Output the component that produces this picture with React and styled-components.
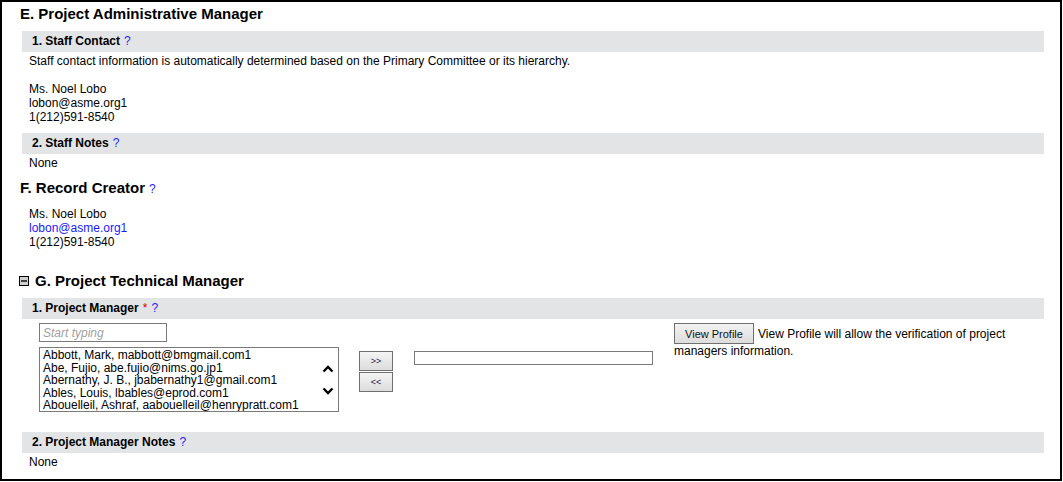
import React from 'react';
import styled, { createGlobalStyle } from 'styled-components';

const GlobalStyle = createGlobalStyle`
  body {
    margin: 0;
    background: #fff;
    font-family: "Liberation Sans", Arial, sans-serif;
    color: #000;
  }
`;

// outer black frame round the whole form
const Frame = styled.div`
  width: 1062px;
  height: 481px;
  box-sizing: border-box;
  border: 2px solid #000;
  padding: 3px 16px 0 0;
  overflow: hidden;
  background: #fff;
`;

const Heading = styled.h2`
  display: flex;
  align-items: center;
  gap: 6px;
  height: 18px;
  margin: ${(p) => p.$top || 0}px 0 8px 18px;
  font-size: 15px;
  line-height: 18px;
  font-weight: bold;
`;

const Help = styled.span`
  color: #2727f5;
  font-weight: normal;
  font-size: 12px;
  line-height: 0;
  margin-left: 4px;
`;

const Bar = styled.div`
  margin: ${(p) => p.$top || 0}px 0 0 20px;
  height: 21px;
  padding-left: 10px;
  background: #e3e4e6;
  font-size: 12px;
  font-weight: bold;
  line-height: 21px;
`;

const BarHelp = styled.span`
  color: #2727f5;
  font-weight: normal;
  margin-left: 4px;
`;

const Required = styled.span`
  color: #d40000;
  font-weight: normal;
  margin-left: 4px;
`;

const Body = styled.div`
  padding: 2px 0 0 27px;
  font-size: 12px;
  line-height: 14px;
`;

const MailLink = styled.a`
  color: #1a1aff;
  text-decoration: none;
`;

const ToggleBox = styled.svg`
  width: 10px;
  height: 10px;
  flex: none;
  margin-left: -1px;
`;

const PickerRow = styled.div`
  display: flex;
  align-items: flex-start;
  padding: 4px 0 0 37px;
`;

const PickerCol = styled.div`
  display: flex;
  flex-direction: column;
  gap: 5px;
  width: 300px;
`;

const SearchInput = styled.input`
  width: 128px;
  height: 19px;
  box-sizing: border-box;
  border: 1px solid #7a7a7a;
  padding: 0 3px;
  font-family: "Liberation Sans", Arial, sans-serif;
  font-size: 12px;
  outline: none;
  &::placeholder {
    color: #a0a0a0;
    font-style: italic;
  }
`;

const ListBox = styled.div`
  display: flex;
  width: 300px;
  height: 65px;
  box-sizing: border-box;
  border: 1px solid #7a7a7a;
  background: #fff;
`;

const Options = styled.div`
  flex: 1;
  padding: 1px 3px;
  font-size: 12px;
  line-height: 12.5px;
  white-space: nowrap;
  overflow: hidden;
`;

const ScrollCol = styled.div`
  width: 21px;
  display: flex;
  flex-direction: column;
  align-items: center;
  justify-content: center;
  gap: 14px;
`;

const Chevron = styled.svg`
  width: 12px;
  height: 8px;
`;

const MoverCol = styled.div`
  display: flex;
  flex-direction: column;
  gap: 1px;
  margin: 28px 0 0 20px;
`;

const MoveButton = styled.button`
  width: 34px;
  height: 20px;
  padding: 0;
  border: 1px solid #707070;
  background: linear-gradient(#f4f4f4, #dcdcdc);
  color: #1c1c50;
  font-family: "Liberation Sans", Arial, sans-serif;
  font-size: 9px;
  line-height: 18px;
`;

const TargetInput = styled.input`
  width: 239px;
  height: 14px;
  box-sizing: border-box;
  margin: 28px 0 0 21px;
  border: 1px solid #7a7a7a;
  padding: 0;
  outline: none;
`;

const ProfilePanel = styled.div`
  width: 360px;
  margin-left: 21px;
  font-size: 12px;
  line-height: 14px;
`;

const ProfileButton = styled.button`
  width: 80px;
  height: 21px;
  margin-right: 4px;
  padding: 0;
  border: 1px solid #707070;
  background: linear-gradient(#f2f2f2, #dddddd);
  color: #111;
  font-family: "Liberation Sans", Arial, sans-serif;
  font-size: 11px;
  vertical-align: baseline;
`;

const managers = [
  'Abbott, Mark, mabbott@bmgmail.com1',
  'Abe, Fujio, abe.fujio@nims.go.jp1',
  'Abernathy, J. B., jbabernathy1@gmail.com1',
  'Ables, Louis, lbables@eprod.com1',
  'Abouelleil, Ashraf, aabouelleil@henrypratt.com1',
];

const App = () => {
  return (
    <>
      <GlobalStyle />
      <Frame>
        <Heading>E. Project Administrative Manager</Heading>
        <Bar>
          1. Staff Contact<BarHelp>?</BarHelp>
        </Bar>
        <Body>
          Staff contact information is automatically determined based on the Primary Committee or its hierarchy.
          <br />
          <br />
          Ms. Noel Lobo
          <br />
          lobon@asme.org1
          <br />
          1(212)591-8540
        </Body>

        <Bar $top={9}>
          2. Staff Notes<BarHelp>?</BarHelp>
        </Bar>
        <Body>None</Body>

        <Heading $top={9}>
          <span>
            F. Record Creator<Help>?</Help>
          </span>
        </Heading>
        <Body>
          Ms. Noel Lobo
          <br />
          <MailLink href="#">lobon@asme.org1</MailLink>
          <br />
          1(212)591-8540
        </Body>

        <Heading $top={23}>
          <ToggleBox viewBox="0 0 10 10">
            <rect x="0.5" y="0.5" width="9" height="9" fill="#d0d0d0" stroke="#000" />
            <line x1="2" y1="5" x2="8" y2="5" stroke="#000" strokeWidth="1.4" />
          </ToggleBox>
          G. Project Technical Manager
        </Heading>
        <Bar>
          1. Project Manager<Required>*</Required>
          <BarHelp>?</BarHelp>
        </Bar>
        <PickerRow>
          <PickerCol>
            <SearchInput placeholder="Start typing" />
            <ListBox>
              <Options>
                {managers.map((m) => (
                  <div key={m}>{m}</div>
                ))}
              </Options>
              <ScrollCol>
                <Chevron viewBox="0 0 12 8">
                  <polyline points="1.5,6.5 6,2 10.5,6.5" fill="none" stroke="#000" strokeWidth="2.4" />
                </Chevron>
                <Chevron viewBox="0 0 12 8">
                  <polyline points="1.5,1.5 6,6 10.5,1.5" fill="none" stroke="#000" strokeWidth="2.4" />
                </Chevron>
              </ScrollCol>
            </ListBox>
          </PickerCol>
          <MoverCol>
            <MoveButton>&gt;&gt;</MoveButton>
            <MoveButton>&lt;&lt;</MoveButton>
          </MoverCol>
          <TargetInput />
          <ProfilePanel>
            <ProfileButton>View Profile</ProfileButton>
            View Profile will allow the verification of project managers information.
          </ProfilePanel>
        </PickerRow>

        <Bar $top={20}>
          2. Project Manager Notes<BarHelp>?</BarHelp>
        </Bar>
        <Body>None</Body>
      </Frame>
    </>
  );
};

export default App;
